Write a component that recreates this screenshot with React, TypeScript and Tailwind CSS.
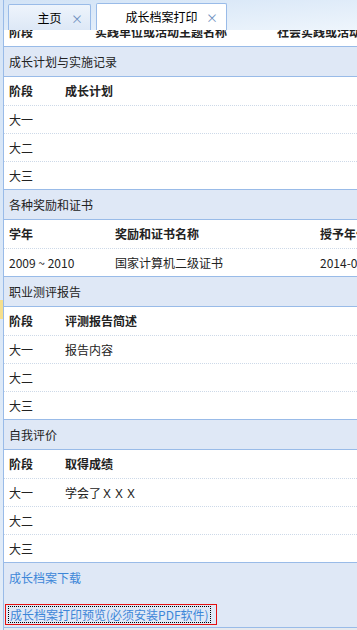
import React from "react";

const font = { fontFamily: '"Noto Sans CJK SC", "Liberation Sans", sans-serif' };

type Cols = string[];

function Row({ cells, widths, bold, last }: { cells: Cols; widths: string[]; bold?: boolean; last?: boolean }) {
  return (
    <div
      className={`flex items-center whitespace-nowrap border-b ${bold ? "h-[29px] font-bold" : "h-[28px]"} ${
        last ? "border-solid border-[#99bbe8]" : "border-dotted border-[#cdd9e8]"
      }`}
    >
      {cells.map((c, i) => (
        <div key={i} className={`${widths[i]} shrink-0 pl-[5px]`}>
          {c}
        </div>
      ))}
    </div>
  );
}

function Section({ title }: { title: string }) {
  return (
    <div className="h-[30px] flex items-center pl-[5px] bg-[#dfe8f6] border-b border-[#99bbe8]">{title}</div>
  );
}

function Tab({ label, active }: { label: string; active?: boolean }) {
  return (
    <div
      className={`relative flex items-center justify-center border border-b-0 border-[#99bbe8] rounded-t-[2px] ${
        active ? "w-[131px] h-[27px] bg-white" : "w-[83px] h-[26px] bg-gradient-to-b from-[#eef4fc] to-[#dde8f6]"
      }`}
    >
      <span className="text-[12px] text-black">{label}</span>
      <span className={`absolute top-[5px] text-[12px] text-[#6f8fc0] ${active ? "right-[8px]" : "right-[7px]"}`}>×</span>
    </div>
  );
}

const stageW = ["w-[56px]", "w-[300px]"];

export default function App() {
  return (
    <div className="w-[357px] h-[630px] overflow-hidden flex bg-[#dbe7f6] text-[12px] text-[#222]" style={font}>
      <div className="w-[3px] shrink-0 flex flex-col bg-gradient-to-b from-[#d6e5f7] to-[#e2ecf8]">
        <div className="h-[300px]" />
        <div className="h-[19px] bg-[#f6df8c]" />
      </div>
      <div className="flex-1 min-w-0 flex flex-col border-l border-[#99bbe8]">
        <div className="h-[30px] shrink-0 flex items-end gap-[5px] pl-[4px] bg-gradient-to-br from-[#d2e3f6] to-[#eef5fc]">
          <Tab label="主页" />
          <Tab label="成长档案打印" active />
        </div>
        <div className="flex-1 overflow-hidden bg-white">
          <div className="-mt-[12px]">
            <Row
              bold
              last
              widths={["w-[86px]", "w-[182px]", "w-[200px]"]}
              cells={["阶段", "实践单位或活动主题名称", "社会实践或活动时间"]}
            />
            <Section title="成长计划与实施记录" />
            <Row bold widths={stageW} cells={["阶段", "成长计划"]} />
            <Row widths={stageW} cells={["大一", ""]} />
            <Row widths={stageW} cells={["大二", ""]} />
            <Row last widths={stageW} cells={["大三", ""]} />

            <Section title="各种奖励和证书" />
            <Row bold widths={["w-[106px]", "w-[205px]", "w-[120px]"]} cells={["学年", "奖励和证书名称", "授予年份"]} />
            <Row
              last
              widths={["w-[106px]", "w-[205px]", "w-[120px]"]}
              cells={["2009 ~ 2010", "国家计算机二级证书", "2014-09-01"]}
            />

            <Section title="职业测评报告" />
            <Row bold widths={stageW} cells={["阶段", "评测报告简述"]} />
            <Row widths={stageW} cells={["大一", "报告内容"]} />
            <Row widths={stageW} cells={["大二", ""]} />
            <Row last widths={stageW} cells={["大三", ""]} />

            <Section title="自我评价" />
            <Row bold widths={stageW} cells={["阶段", "取得成绩"]} />
            <Row widths={stageW} cells={["大一", "学会了ＸＸＸ"]} />
            <Row widths={stageW} cells={["大二", ""]} />
            <Row last widths={stageW} cells={["大三", ""]} />

            <div className="h-[65px] bg-[#dfe8f6] border-b border-[#99bbe8] pt-[7px] text-[#3d86d8]">
              <div className="pl-[5px] leading-[16px]">成长档案下载</div>
              <div className="mt-[18px] ml-[1px] inline-flex border border-[#e41010] pl-[2px] pr-[5px] py-[1px]">
                <span className="border border-dotted border-black px-[1px] leading-[15px] whitespace-nowrap">
                  成长档案打印预览(必须安装PDF软件)
                </span>
              </div>
            </div>
            <div className="h-[20px] bg-[#e6e9ee]" />
          </div>
        </div>
      </div>
    </div>
  );
}
